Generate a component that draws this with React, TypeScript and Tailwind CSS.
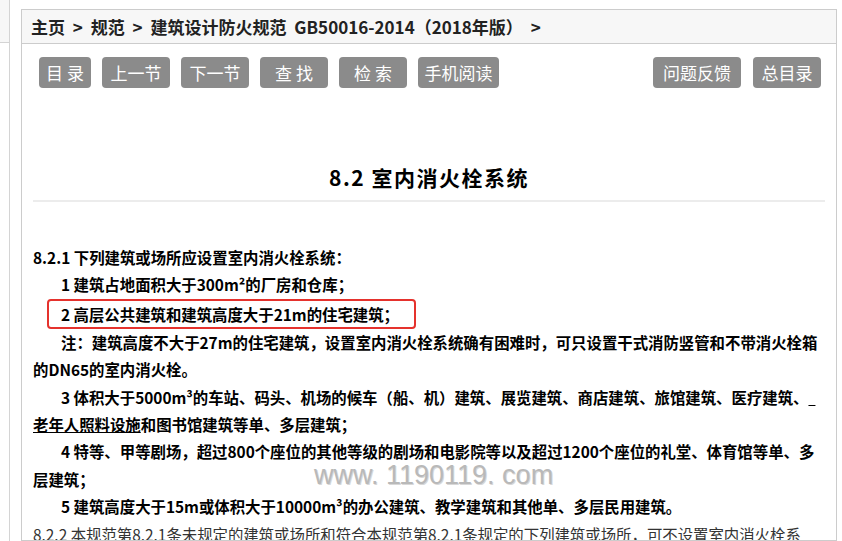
import React from "react";

const cjk = "font-['Noto_Sans_CJK_SC','Noto_Sans',sans-serif]";

const leftTools = [
  { label: "目 录", w: "w-[52px]" },
  { label: "上一节", w: "w-[68px]" },
  { label: "下一节", w: "w-[68px]" },
  { label: "查 找", w: "w-[68px]" },
  { label: "检 索", w: "w-[68px]" },
  { label: "手机阅读", w: "w-[81px]" },
];

const rightTools = [
  { label: "问题反馈", w: "w-[88px]" },
  { label: "总目录", w: "w-[68px]" },
];

function ToolButton({ label, w }: { label: string; w: string }) {
  return (
    <button
      className={`${w} h-[31px] rounded-[4px] bg-[#8b8b8b] text-[17px] leading-none text-white`}
    >
      {label}
    </button>
  );
}

export default function App() {
  return (
    <div className={`relative flex h-[541px] w-[842px] overflow-hidden bg-white ${cjk}`}>
      {/* left sidebar edge */}
      <div className="w-[10px] shrink-0 border-r border-[#d4d4d4]">
        <div className="h-[43px] border-b border-[#d4d4d4] bg-[#f7f7f7]" />
      </div>

      <div className="ml-[11px] mt-[9px] w-[816px] shrink-0 overflow-hidden border border-[#cccccc]">
        {/* breadcrumb */}
        <div className="flex h-[34px] items-center border-b border-[#cccccc] bg-[#f7f7f7] px-[9px] text-[17px] font-bold text-[#222] [word-spacing:4px]">
          主页 &gt; 规范 &gt; 建筑设计防火规范 GB50016-2014（2018年版） &gt;
        </div>

        {/* toolbar */}
        <div className="flex justify-between pl-[17px] pr-[15px] pt-[13px]">
          <div className="flex gap-[11px]">
            {leftTools.map((t) => (
              <ToolButton key={t.label} {...t} />
            ))}
          </div>
          <div className="flex gap-[12px]">
            {rightTools.map((t) => (
              <ToolButton key={t.label} {...t} />
            ))}
          </div>
        </div>

        {/* section title */}
        <div className="mx-[11px] mt-[74px] border-b-2 border-[#ececec] pb-[8px] text-center text-[21px] font-bold leading-[30px] tracking-[1.5px] text-black">
          8.2 室内消火栓系统
        </div>

        {/* body */}
        <div className="mt-[42px] px-[11px] text-[15.4px] font-bold leading-[27.4px] text-black">
          <p>8.2.1 下列建筑或场所应设置室内消火栓系统：</p>
          <p className="indent-[28px]">1 建筑占地面积大于300m²的厂房和仓库；</p>
          <div className="ml-[14px]">
            <span className="inline-block rounded-[4px] border-2 border-[#e5322d] pl-[12px] pr-[15px] leading-[26px]">
              2 高层公共建筑和建筑高度大于21m的住宅建筑；
            </span>
          </div>
          <p className="whitespace-nowrap indent-[28px]">
            注：建筑高度不大于27m的住宅建筑，设置室内消火栓系统确有困难时，可只设置干式消防竖管和不带消火栓箱
            <br />
            的DN65的室内消火栓。
          </p>
          <p className="whitespace-nowrap indent-[28px]">
            3 体积大于5000m³的车站、码头、机场的候车（船、机）建筑、展览建筑、商店建筑、旅馆建筑、医疗建筑、
            <span className="underline">&nbsp;&nbsp;</span>
            <br />
            <span className="underline">老年人照料设施</span>和图书馆建筑等单、多层建筑；
          </p>
          <p className="whitespace-nowrap indent-[28px]">
            4 特等、甲等剧场，超过800个座位的其他等级的剧场和电影院等以及超过1200个座位的礼堂、体育馆等单、多
            <br />
            层建筑；
          </p>
          <p className="whitespace-nowrap indent-[28px]">
            5 建筑高度大于15m或体积大于10000m³的办公建筑、教学建筑和其他单、多层民用建筑。
          </p>
          <p className="whitespace-nowrap font-normal text-[#333]">
            8.2.2 本规范第8.2.1条未规定的建筑或场所和符合本规范第8.2.1条规定的下列建筑或场所，可不设置室内消火栓系
            <br />
            统：
          </p>
        </div>
      </div>

      {/* site watermark */}
      <div className="pointer-events-none absolute left-[314px] top-[462px] font-['Liberation_Sans',Arial,sans-serif] text-[27px] leading-none text-[#b9b9b9] [text-shadow:1px_1px_0_#d8d8d8]">
        www. 1190119. com
      </div>
    </div>
  );
}
